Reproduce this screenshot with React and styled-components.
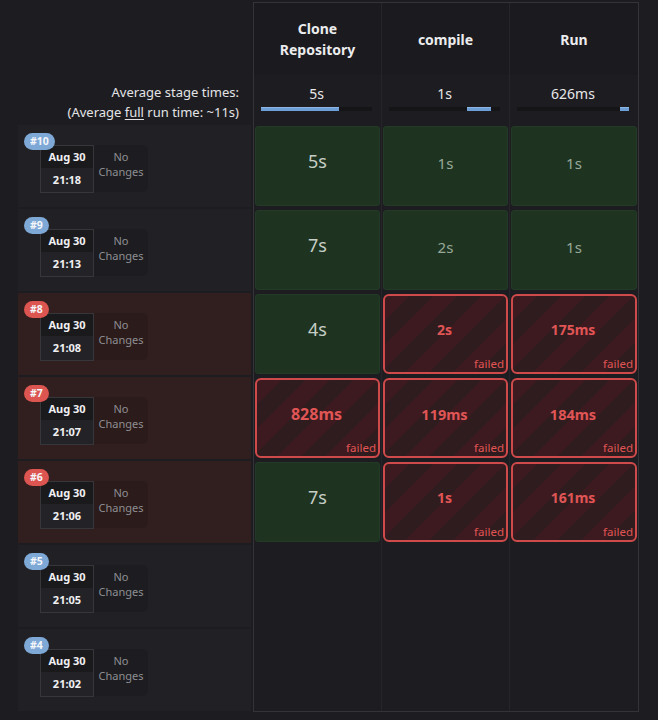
import React from "react"
import styled, { createGlobalStyle, css } from "styled-components"

const GlobalStyle = createGlobalStyle`
  html, body {
    margin: 0;
    background: #1d1d21;
    font-family: "Noto Sans", "Open Sans", sans-serif;
    color: #e2e2e4;
  }
`

const Page = styled.div`
  display: flex;
  align-items: flex-start;
  gap: 2px;
  padding: 2px 0 0 18px;
`

const LeftCol = styled.div`
  width: 233px;
  display: flex;
  flex-direction: column;
  gap: 2px;
`

const LeftHead = styled.div`
  height: 121px;
  display: flex;
  flex-direction: column;
  justify-content: flex-end;
  align-items: flex-end;
  padding: 0 12px 1px 0;
  box-sizing: border-box;
  font-size: 13px;
  line-height: 20px;
  color: #e4e4e6;
  text-align: right;

  u {
    text-underline-offset: 2px;
  }
`

const BuildRow = styled.div`
  position: relative;
  height: 82px;
  background: ${(p) => (p.$failed ? "#301f1e" : "#212125")};
  padding: 20px 0 0 22px;
  box-sizing: border-box;
  display: flex;
  align-items: flex-start;
`

const Badge = styled.span`
  position: absolute;
  left: 6px;
  top: 8px;
  height: 17px;
  padding: 0 6px;
  border-radius: 9px;
  background: ${(p) => (p.$failed ? "#dc5550" : "#7ea8d6")};
  color: #f4f6fa;
  font-size: 10.5px;
  font-weight: 700;
  line-height: 17px;
  z-index: 1;
`

const DateBox = styled.div`
  width: 54px;
  border: 1px solid #37373b;
  box-sizing: border-box;
  font-size: 11px;
  font-weight: 700;
  color: #f0f0f2;
  text-align: center;
`

const DatePart = styled.div`
  height: ${(p) => (p.$top ? "22px" : "24px")};
  line-height: ${(p) => (p.$top ? "22px" : "24px")};
  background: ${(p) => (p.$top ? "#1a1a1d" : "#232327")};
`

const Changes = styled.div`
  width: 54px;
  height: 47px;
  border-radius: 0 5px 5px 0;
  background: rgba(0, 0, 0, 0.1);
  color: #8e8e92;
  font-size: 11px;
  line-height: 15px;
  text-align: center;
  padding-top: 4px;
  box-sizing: border-box;
`

const Table = styled.div`
  display: grid;
  grid-template-columns: repeat(3, 128px);
  grid-template-rows: 72px 48px repeat(7, 84px);
  border: 1px solid #333338;
`

const Slot = styled.div`
  box-sizing: border-box;
  border-right: 1px solid #25252a;
  &:nth-child(3n) {
    border-right: none;
  }
`

const StageName = styled(Slot)`
  display: flex;
  align-items: center;
  justify-content: center;
  text-align: center;
  font-size: 14px;
  font-weight: 700;
  line-height: 21px;
  color: #ececee;
  background: #1b1b1f;
  padding: 0 14px;
`

const AvgSlot = styled(Slot)`
  padding: 9px 9px 0 7px;
  text-align: center;
  font-size: 14px;
  line-height: 20px;
  color: #e8e8ea;
`

const Track = styled.div`
  position: relative;
  height: 4px;
  margin-top: 3px;
  background: #151518;
`

const Fill = styled.div`
  position: absolute;
  top: 0;
  bottom: 0;
  background: #6d9fd6;
  border-top: 1px solid #8fb6e2;
  box-sizing: border-box;
`

const CellSlot = styled(Slot)`
  padding: 3px 1px 1px;
`

const stripes = css`
  background: repeating-linear-gradient(
    135deg,
    #3d1a1f 0,
    #3d1a1f 17px,
    #2f1c1e 17px,
    #2f1c1e 34px
  );
`

const StageCell = styled.div`
  height: 80px;
  box-sizing: border-box;
  display: flex;
  flex-direction: column;
  align-items: center;
  ${(p) =>
    p.$failed
      ? css`
          ${stripes};
          border: 2px solid #cf4b4b;
          border-radius: 6px;
          padding: 22px 2px 1px 0;
          color: #e05555;
          font-weight: 700;
        `
      : css`
          background: #1e3421;
          border: 1px solid #233b26;
          border-radius: 3px;
          padding-top: ${p.$size > 16 ? 22 : 24}px;
          color: ${p.$size > 16 ? "#c6cec6" : "#98a898"};
        `}
  font-size: ${(p) => p.$size}px;
  line-height: 24px;
`

const FailedLabel = styled.span`
  margin-top: auto;
  align-self: flex-end;
  font-size: 11.5px;
  font-weight: 400;
  line-height: 14px;
`

const stages = [
  { name: "Clone Repository", avg: "5s", from: 0, to: 70 },
  { name: "compile", avg: "1s", from: 70, to: 92 },
  { name: "Run", avg: "626ms", from: 92, to: 100 },
]

const builds = [
  { id: 10, time: "21:18", cells: [["5s", 18], ["1s", 15], ["1s", 15]] },
  { id: 9, time: "21:13", cells: [["7s", 18], ["2s", 15], ["1s", 15]] },
  { id: 8, time: "21:08", failed: true, cells: [["4s", 18], ["2s", 14, true], ["175ms", 14, true]] },
  { id: 7, time: "21:07", failed: true, cells: [["828ms", 16, true], ["119ms", 14.5, true], ["184ms", 14.5, true]] },
  { id: 6, time: "21:06", failed: true, cells: [["7s", 18], ["1s", 14, true], ["161ms", 14, true]] },
  { id: 5, time: "21:05", cells: [] },
  { id: 4, time: "21:02", cells: [] },
]

const App = () => {
  return (
    <Page>
      <GlobalStyle />
      <LeftCol>
        <LeftHead>
          <div>Average stage times:</div>
          <div>
            (Average <u>full</u> run time: ~11s)
          </div>
        </LeftHead>
        {builds.map((b) => (
          <BuildRow key={b.id} $failed={b.failed}>
            <Badge $failed={b.failed}>#{b.id}</Badge>
            <DateBox>
              <DatePart $top>Aug 30</DatePart>
              <DatePart>{b.time}</DatePart>
            </DateBox>
            <Changes>
              No
              <br />
              Changes
            </Changes>
          </BuildRow>
        ))}
      </LeftCol>
      <Table>
        {stages.map((s) => (
          <StageName key={s.name}>{s.name}</StageName>
        ))}
        {stages.map((s) => (
          <AvgSlot key={s.name}>
            {s.avg}
            <Track>
              <Fill style={{ left: `${s.from}%`, width: `${s.to - s.from}%` }} />
            </Track>
          </AvgSlot>
        ))}
        {builds.map((b) =>
          [0, 1, 2].map((i) => {
            const c = b.cells[i]
            return (
              <CellSlot key={`${b.id}-${i}`}>
                {c && (
                  <StageCell $failed={c[2]} $size={c[1]}>
                    {c[0]}
                    {c[2] && <FailedLabel>failed</FailedLabel>}
                  </StageCell>
                )}
              </CellSlot>
            )
          })
        )}
      </Table>
    </Page>
  )
}

export default App
